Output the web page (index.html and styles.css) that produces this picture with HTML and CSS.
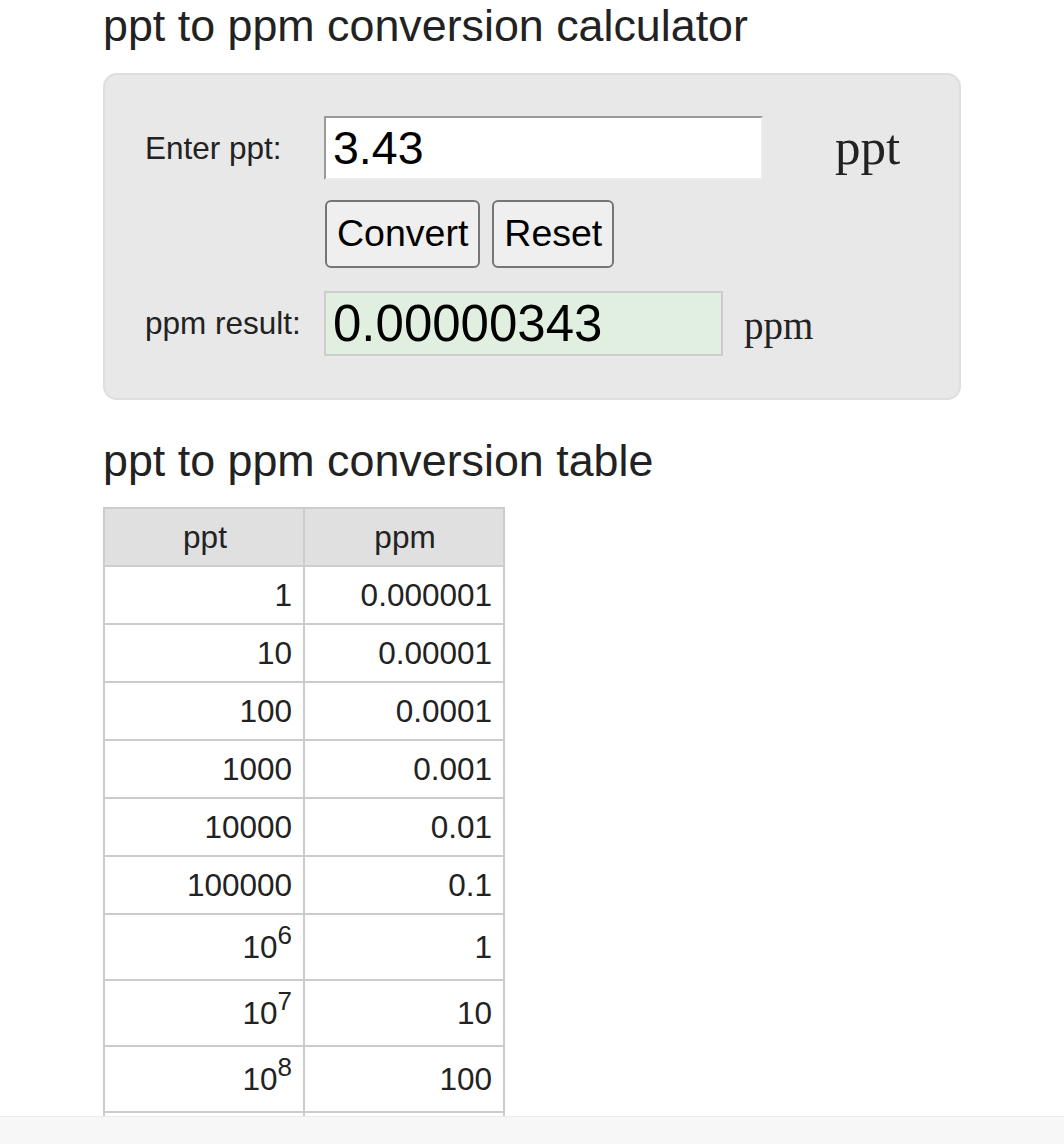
FILE: index.html
```html
<!DOCTYPE html>
<html lang="en">
<head>
    <meta charset="UTF-8">
    <title>ppt to ppm conversion calculator</title>
    <link rel="stylesheet" href="styles.css">
</head>
<body>

    <div class="page">
        <h1>ppt to ppm conversion calculator</h1>

        <!-- Calculator -->
        <div class="calc">
            <div class="calc-row">
                <label class="calc-label" for="pptInput">Enter ppt:</label>
                <input type="text" id="pptInput" class="calc-input" value="3.43">
                <span class="unit unit-big">ppt</span>
            </div>
            <div class="calc-row">
                <span class="calc-label"></span>
                <div class="buttons">
                    <button onclick="convert()">Convert</button>
                    <button onclick="resetForm()">Reset</button>
                </div>
            </div>
            <div class="calc-row">
                <label class="calc-label" for="ppmResult">ppm result:</label>
                <input type="text" id="ppmResult" class="calc-result" value="0.00000343" readonly>
                <span class="unit unit-small">ppm</span>
            </div>
        </div>

        <h2>ppt to ppm conversion table</h2>

        <table class="conv-table">
            <thead>
                <tr><th>ppt</th><th>ppm</th></tr>
            </thead>
            <tbody>
                <tr><td>1</td><td>0.000001</td></tr>
                <tr><td>10</td><td>0.00001</td></tr>
                <tr><td>100</td><td>0.0001</td></tr>
                <tr><td>1000</td><td>0.001</td></tr>
                <tr><td>10000</td><td>0.01</td></tr>
                <tr><td>100000</td><td>0.1</td></tr>
                <tr class="exp"><td>10<sup>6</sup></td><td>1</td></tr>
                <tr class="exp"><td>10<sup>7</sup></td><td>10</td></tr>
                <tr class="exp"><td>10<sup>8</sup></td><td>100</td></tr>
                <tr class="exp"><td>10<sup>9</sup></td><td>1000</td></tr>
            </tbody>
        </table>
    </div>

    <div class="bottom-bar"></div>

    <script>
        // Convert ppt to ppm
        function convert() {
            const ppt = parseFloat(document.getElementById('pptInput').value);
            if (isNaN(ppt)) {
                document.getElementById('ppmResult').value = '';
                return;
            }
            document.getElementById('ppmResult').value = +(ppt / 1000000).toPrecision(12);
        }

        // Reset
        function resetForm() {
            document.getElementById('pptInput').value = '';
            document.getElementById('ppmResult').value = '';
        }
    </script>
</body>
</html>
```

FILE: styles.css
```css
body {
    margin: 0;
    background-color: #fff;
    color: #222;
    font-family: "Liberation Sans", Arial, sans-serif;
}
.page {
    width: 858px;
    margin: 0 auto;
    padding-bottom: 60px;
}
h1, h2 {
    font-size: 44.8px;
    font-weight: normal;
    margin: 0;
    color: #222;
}
h1 {
    margin-bottom: 22px;
}
h2 {
    margin-top: 35px;
    margin-bottom: 21px;
}

/* Calculator box */
.calc {
    background-color: #e8e8e8;
    border: 2px solid #dedede;
    border-radius: 14px;
    padding: 41px 40px 42px 40px;
    display: flex;
    flex-direction: column;
    gap: 20px;
}
.calc-row {
    display: flex;
    align-items: center;
}
.calc-row:last-child {
    margin-top: 3px;
}
.calc-label {
    width: 179px;
    font-size: 31.5px;
    color: #222;
    flex-shrink: 0;
}
.calc-input {
    box-sizing: border-box;
    width: 439px;
    height: 64px;
    padding: 0 7px;
    font-family: "Liberation Sans", Arial, sans-serif;
    font-size: 46.5px;
    color: #000;
    background-color: #fff;
    border-style: solid;
    border-width: 2px;
    border-color: #9a9a9a #ececec #ececec #9a9a9a;
    outline: none;
}
.calc-result {
    box-sizing: border-box;
    width: 399px;
    height: 65px;
    padding: 0 7px;
    font-family: "Liberation Sans", Arial, sans-serif;
    font-size: 51px;
    color: #000;
    background-color: #e1efe1;
    border: 2px solid #cdcdcd;
    outline: none;
}
.unit {
    font-family: "Liberation Serif", "Times New Roman", serif;
    color: #222;
}
.unit-big {
    font-size: 51px;
    margin-left: 72px;
    margin-top: -2px;
}
.unit-small {
    font-size: 39px;
    margin-left: 21px;
    margin-top: 4px;
}
.buttons {
    display: flex;
    gap: 12px;
    margin-left: 1px;
}
.buttons button {
    font-family: "Liberation Sans", Arial, sans-serif;
    font-size: 37.5px;
    color: #000;
    background-color: #efefef;
    border: 2px solid #767676;
    border-radius: 6px;
    padding: 10px 10px 11px 10px;
    cursor: pointer;
}
.buttons button:hover {
    background-color: #e5e5e5;
}

/* Conversion table */
.conv-table {
    border-collapse: collapse;
    font-size: 31.5px;
    color: #222;
}
.conv-table th, .conv-table td {
    width: 174px;
    border: 2px solid #cccccc;
    padding: 10px 11px 10px 13px;
    line-height: 36px;
}
.conv-table th {
    background-color: #e0e0e0;
    font-weight: normal;
    text-align: center;
}
.conv-table td {
    background-color: #fff;
    text-align: right;
}
.conv-table tr.exp td {
    padding-top: 14px;
    padding-bottom: 14px;
}
.conv-table sup {
    font-size: 26px;
    line-height: 0;
    vertical-align: 14px;
}

.bottom-bar {
    position: fixed;
    left: 0;
    right: 0;
    bottom: 0;
    height: 27px;
    background-color: #f7f7f7;
    border-top: 1px solid #ebebeb;
}
```
